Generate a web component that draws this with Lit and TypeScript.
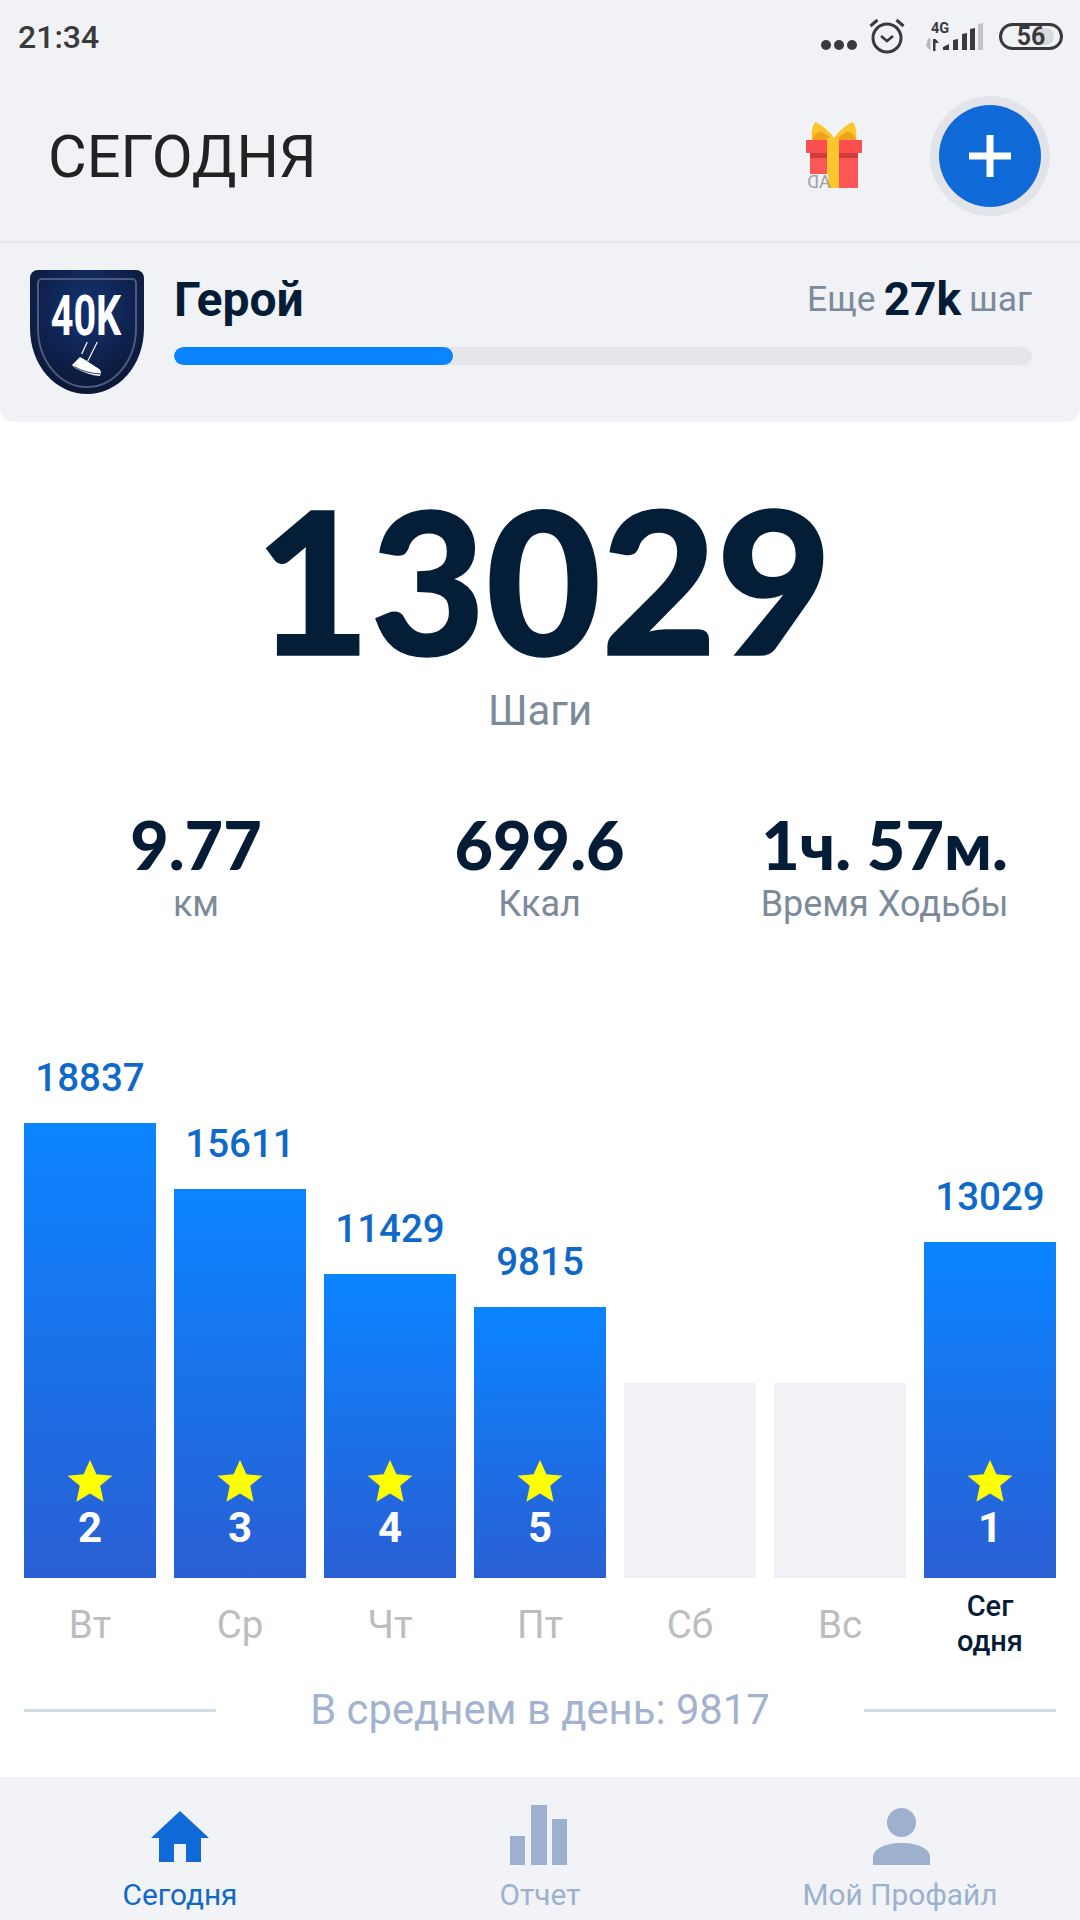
import { LitElement, html, css, svg } from "lit";
import { customElement } from "lit/decorators.js";

const days = [
  { label: "Вт", value: "18837", h: 455, rank: "2" },
  { label: "Ср", value: "15611", h: 389, rank: "3" },
  { label: "Чт", value: "11429", h: 304, rank: "4" },
  { label: "Пт", value: "9815", h: 271, rank: "5" },
  { label: "Сб", value: "", h: 195, rank: "" },
  { label: "Вс", value: "", h: 195, rank: "" },
  { label: "Сег одня", value: "13029", h: 336, rank: "1", today: true },
];

const star = svg`<svg class="star" viewBox="0 0 46 42"><path d="M23 0l6.4 14.2 16 1.6-12.2 10 3.4 16L23 33.6 9.4 41.8l3.4-16L.6 15.8l16-1.6z" fill="#ffff00"/></svg>`;

@customElement("app-root")
export class AppRoot extends LitElement {
  static styles = css`
    :host { display: block; width: 1080px; height: 1920px; background: #fff; font-family: Roboto, "Noto Sans", sans-serif; overflow: hidden; }
    .page { display: flex; flex-direction: column; height: 1920px; }
    .top { background: #f0f2f6; height: 241px; border-bottom: 2px solid #e6e8ec; flex: none; box-sizing: content-box; }
    .status { height: 72px; display: flex; align-items: center; padding: 0 17px 0 18px; color: #3a3a3c; box-sizing: border-box; }
    .time { font-size: 32px; font-weight: 500; flex: 1; margin-top: 2px; }
    .dots { display: flex; gap: 3px; margin-right: 12px; margin-top: 18px; }
    .dots i { width: 10px; height: 10px; border-radius: 50%; background: #3a3a3c; }
    .alarm { width: 36px; height: 36px; margin-right: 20px; }
    .net { width: 58px; height: 30px; margin-right: 16px; }
    .bat { width: 64px; height: 27px; border: 3px solid #3a3a3c; border-radius: 14px; box-sizing: border-box; position: relative; display: flex; align-items: center; justify-content: center; font-size: 25px; font-weight: 700; color: #3a3a3c; overflow: hidden; }
    .bat::before { content: ""; position: absolute; left: 58%; top: 2px; bottom: 2px; width: 32%; background: #d8d9dc; border-radius: 0 10px 10px 0; }
    .bat span { position: relative; }
    .head { height: 169px; display: flex; align-items: center; padding: 0 39px 0 48px; }
    .title { flex: 1; font-size: 59.500px; color: #222; font-weight: 400; }
    .gift { width: 56px; height: 72px; margin-right: 77px; margin-top: 2px; }
    .add { width: 102px; height: 102px; border-radius: 50%; background: #0f69d6; box-shadow: 0 0 0 9px #e2e4e9; display: flex; align-items: center; justify-content: center; margin-top: -1px; }
    .add svg { width: 44px; height: 44px; }
    .card { background: #f0f2f6; height: 179px; border-radius: 0 0 14px 14px; flex: none; display: flex; padding: 27px 48px 0 30px; box-sizing: border-box; gap: 30px; }
    .shield { width: 114px; height: 124px; flex: none; }
    .info { flex: 1; display: flex; flex-direction: column; }
    .row { display: flex; justify-content: space-between; align-items: center; height: 58px; }
    .level { font-size: 48px; font-weight: 700; color: #041c36; }
    .more { font-size: 35.500px; color: #7d8a9a; display: flex; align-items: center; gap: 8px; }
    .more b { font-size: 46px; color: #041c36; font-weight: 700; }
    .track { height: 18px; border-radius: 9px; background: #e4e6ea; margin-top: 19px; overflow: hidden; }
    .fill { height: 100%; border-radius: 9px; background: #0a84ff; }
    .hero { text-align: center; flex: none; height: 340px; display: flex; flex-direction: column; align-items: center; padding-top: 76px; box-sizing: border-box; }
    .num { font-family: Lato, sans-serif; font-weight: 900; font-size: 199px; line-height: 160px; color: #041e38; margin-left: 7px; -webkit-text-stroke: 1.500px #041e38; }
    .cap { font-size: 42px; color: #7d8a9a; line-height: 50px; margin-top: 28px; }
    .stats { display: grid; grid-template-columns: repeat(3, 1fr); flex: none; height: 180px; width: 1035px; margin-left: 22px; }
    .stat { display: flex; flex-direction: column; align-items: center; padding-top: 52px; box-sizing: border-box; }
    .stat b { font-family: Lato, sans-serif; font-weight: 900; font-size: 66.500px; line-height: 60px; color: #041c36; white-space: nowrap; }
    .stat:first-child { padding-left: 3px; }
    .stat span { font-size: 36px; line-height: 42px; color: #7d8a9a; margin-top: 9px; white-space: nowrap; }
    .chart { flex: 1; display: flex; flex-direction: column; justify-content: flex-end; padding: 0 24px; }
    .bars { display: flex; gap: 18px; align-items: flex-end; }
    .col { width: 132px; display: flex; flex-direction: column; align-items: center; }
    .val { font-size: 38.500px; font-weight: 500; color: #0f69c8; line-height: 44px; margin-bottom: 23px; }
    .bar { width: 132px; background: linear-gradient(#0a84ff, #2a5fd4); display: flex; flex-direction: column; align-items: center; justify-content: flex-end; padding-bottom: 28px; box-sizing: border-box; color: #fff; font-size: 42px; font-weight: 700; line-height: 44px; }
    .bar.empty { background: #f0f2f6; }
    .star { width: 46px; height: 42px; margin-bottom: 4px; }
    .labels { display: flex; gap: 18px; height: 89px; }
    .lab { width: 132px; text-align: center; font-size: 38.500px; color: #bdbdbd; padding-top: 26px; line-height: 42px; box-sizing: border-box; }
    .lab.today { font-size: 29px; font-weight: 500; color: #041c36; padding: 11px 30px 0; line-height: 35px; }
    .avg { height: 110px; display: flex; align-items: flex-start; gap: 94px; }
    .avg span { font-size: 41.800px; color: #a3b3cf; line-height: 46px; margin-top: 20px; white-space: nowrap; }
    .avg i { flex: 1; height: 3px; background: #d3dbe4; margin-top: 42px; }
    .nav { height: 143px; background: #f1f3f6; flex: none; display: grid; grid-template-columns: 360px 360px 360px; }
    .tab { display: flex; flex-direction: column; align-items: center; font-size: 29.800px; color: #9db1ce; padding-top: 28px; box-sizing: border-box; }
    .tab svg { width: 60px; height: 60px; margin-bottom: 12px; }
    .tab.on { color: #0f69c8; }
  `;

  render() {
    return html`<div class="page">
      <div class="top">
        <div class="status">
          <span class="time">21:34</span>
          <div class="dots"><i></i><i></i><i></i></div>
          <svg class="alarm" viewBox="0 0 36 36" fill="none" stroke="#3a3a3c"><circle cx="18" cy="20" r="14" stroke-width="3"/><path d="M12 18l6 5 6-5" stroke-width="2.600"/><path d="M1.500 8l7-6M34.500 8l-7-6" stroke-width="3"/></svg>
          <svg class="net" viewBox="0 0 58 30">
            <text x="6" y="11.500" font-size="14.500" font-weight="700" font-family="Roboto" fill="#3a3a3c">4G</text>
            <path d="M18 29v-3l6-3v6zM28 29V19l5-1v11zM37 29V13l5-1v17zM45 29V8l5-1v22z" fill="#3a3a3c"/>
            <path d="M53 29V3l5-1v27z" fill="#c3c4c7"/>
            <path d="M3 17.500h2.500v12L1 25z" fill="#b8b8b8"/>
            <path d="M8 30V18h2.500l3.500 4h-3.500v8z" fill="#3a3a3c"/>
          </svg>
          <div class="bat"><span>56</span></div>
        </div>
        <div class="head">
          <span class="title">СЕГОДНЯ</span>
          <svg class="gift" viewBox="0 0 56 72">
            <path d="M6 18C5 10 6 5 9 0c6 2 15 10 19 16C32 10 41 2 47 0c3 5 4 10 3 18z" fill="#fbc52d"/>
            <path d="M6 18c2-6 6-9 10-8l12 8zM50 18c-2-6-6-9-10-8l-12 8z" fill="#eda220"/>
            <rect x="0" y="18" width="56" height="13" fill="#fb4f4f"/>
            <rect x="4" y="31" width="48" height="35" fill="#fc5656"/>
            <rect x="4" y="31" width="48" height="5" fill="#cf3c3c"/>
            <rect x="21" y="16" width="12" height="50" fill="#fbc52d"/>
            <rect x="4" y="52" width="18" height="14" fill="#f0f2f6"/>
            <text x="-13" y="65.500" text-anchor="middle" font-size="18" font-family="Roboto" fill="#a0a0a0" transform="scale(-1 1)">AD</text>
          </svg>
          <div class="add"><svg viewBox="0 0 44 44"><path d="M18.500 1h7v17.500h17.500v7h-17.500v17.500h-7v-17.500h-17.500v-7h17.500z" fill="#fff"/></svg></div>
        </div>
      </div>
      <div class="card">
        <svg class="shield" viewBox="0 0 114 124">
          <defs><radialGradient id="sg" cx="50%" cy="30%" r="75%"><stop offset="0" stop-color="#143272"/><stop offset="1" stop-color="#0a1530"/></radialGradient></defs>
          <path d="M8 0h98a8 8 0 0 1 8 8v50c0 38-26 66-57 66S0 96 0 58V8a8 8 0 0 1 8-8z" fill="url(#sg)"/>
          <path d="M12 9h90a4 4 0 0 1 4 4v45c0 33-22 59-49 59S8 91 8 58V13a4 4 0 0 1 4-4z" fill="none" stroke="#4e5a7c" stroke-width="2"/>
          <text transform="translate(56 65) scale(.72 1)" text-anchor="middle" font-size="55" font-weight="700" font-family="Roboto" fill="#fff">40K</text>
          <path d="M57.300 72l-5.600 12M67.300 72l-9.500 19" stroke="#fff" stroke-width="1.200" fill="none"/>
          <path d="M42 95l8-8 7 4 9 6q5 2 5 6l-1 3q-12-1-25-8z" fill="#fff"/>
          <path d="M44 96.500q12 7 27 7.500" stroke="#26365c" stroke-width="1" fill="none"/>
        </svg>
        <div class="info">
          <div class="row">
            <span class="level">Герой</span>
            <span class="more">Еще <b>27k</b> шаг</span>
          </div>
          <div class="track"><div class="fill" style="width: 32.500%"></div></div>
        </div>
      </div>
      <div class="hero">
        <div class="num">13029</div>
        <div class="cap">Шаги</div>
      </div>
      <div class="stats">
        <div class="stat"><b>9.77</b><span>км</span></div>
        <div class="stat"><b>699.6</b><span>Ккал</span></div>
        <div class="stat"><b>1ч. 57м.</b><span>Время Ходьбы</span></div>
      </div>
      <div class="chart">
        <div class="bars">
          ${days.map((d) => html`<div class="col">
            ${d.value ? html`<div class="val">${d.value}</div>` : ""}
            <div class="bar ${d.value ? "" : "empty"}" style="height: ${d.h}px">
              ${d.value ? html`${star}<span>${d.rank}</span>` : ""}
            </div>
          </div>`)}
        </div>
        <div class="labels">
          ${days.map((d) => html`<div class="lab ${d.today ? "today" : ""}">${d.label}</div>`)}
        </div>
        <div class="avg"><i></i><span>В среднем в день: 9817</span><i></i></div>
      </div>
      <div class="nav">
        <div class="tab on">
          <svg viewBox="0 0 60 60"><path d="M30 6L59 33H51V57H36V39H24V57H9V33H1z" fill="#0f69d6"/></svg>
          Сегодня
        </div>
        <div class="tab">
          <svg viewBox="0 0 60 60"><path d="M0 31h15v29H0zM21 0h16v60H21zM42 14h15v46H42z" fill="#9db1ce"/></svg>
          Отчет
        </div>
        <div class="tab">
          <svg viewBox="0 0 60 60"><ellipse cx="31.500" cy="17.500" rx="14.500" ry="14.500" fill="#9db1ce"/><path d="M3 60v-8c0-8 12-14 28.500-14S60 44 60 52v8z" fill="#9db1ce"/></svg>
          Мой Профайл
        </div>
      </div>
    </div>`;
  }
}
